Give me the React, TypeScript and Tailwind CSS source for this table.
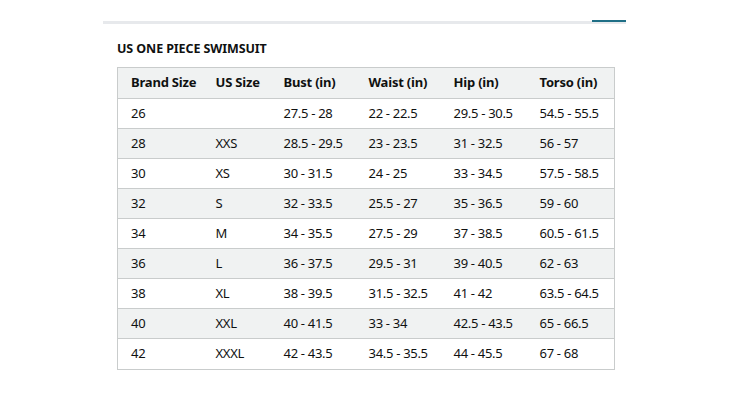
import React from "react";

const headers = ["Brand Size", "US Size", "Bust (in)", "Waist (in)", "Hip (in)", "Torso (in)"];
const rows = [
  ["26", "", "27.5 - 28", "22 - 22.5", "29.5 - 30.5", "54.5 - 55.5"],
  ["28", "XXS", "28.5 - 29.5", "23 - 23.5", "31 - 32.5", "56 - 57"],
  ["30", "XS", "30 - 31.5", "24 - 25", "33 - 34.5", "57.5 - 58.5"],
  ["32", "S", "32 - 33.5", "25.5 - 27", "35 - 36.5", "59 - 60"],
  ["34", "M", "34 - 35.5", "27.5 - 29", "37 - 38.5", "60.5 - 61.5"],
  ["36", "L", "36 - 37.5", "29.5 - 31", "39 - 40.5", "62 - 63"],
  ["38", "XL", "38 - 39.5", "31.5 - 32.5", "41 - 42", "63.5 - 64.5"],
  ["40", "XXL", "40 - 41.5", "33 - 34", "42.5 - 43.5", "65 - 66.5"],
  ["42", "XXXL", "42 - 43.5", "34.5 - 35.5", "44 - 45.5", "67 - 68"],
];
const widths = ["w-[85px]", "w-[68px]", "w-[85px]", "w-[85px]", "w-[86px]", "w-[88px]"];

export default function App() {
  return (
    <div className="w-[734px] h-[414px] bg-white overflow-hidden" style={{ fontFamily: '"Noto Sans", "Open Sans", sans-serif' }}>
      <div className="ml-[103px] w-[523px] pt-[21px]">
        <div className="relative h-[3px] bg-[#e7e9ec]">
          <div className="absolute right-0 top-[-1px] h-[2px] w-[34px] bg-[#1f6f86]" />
        </div>
        <div className="pl-[14px]">
          <div className="mt-[18px] text-[12.5px] font-bold leading-[14px] text-[#0f1111] tracking-[-0.1px]">
            US ONE PIECE SWIMSUIT
          </div>
          <table className="mt-[11px] w-[497px] table-fixed border-collapse border border-[#c9cccc] text-[13px] text-[#0f1111]">
            <colgroup>
              {widths.map((w, i) => (
                <col key={i} className={w} />
              ))}
            </colgroup>
            <thead>
              <tr className="h-[31px] bg-[#f0f2f2] border-b border-[#c9cccc]">
                {headers.map((h) => (
                  <th key={h} className="pl-[13px] text-left font-bold whitespace-nowrap tracking-[-0.2px]">
                    {h}
                  </th>
                ))}
              </tr>
            </thead>
            <tbody>
              {rows.map((r, i) => (
                <tr
                  key={i}
                  className={`${i === rows.length - 1 ? "h-[31px]" : "h-[30px]"} border-b border-[#c9cccc] ${i % 2 === 1 ? "bg-[#f0f2f2]" : "bg-white"}`}
                >
                  {r.map((c, j) => (
                    <td key={j} className="pl-[13px] whitespace-nowrap tracking-[-0.3px]">
                      {c}
                    </td>
                  ))}
                </tr>
              ))}
            </tbody>
          </table>
        </div>
      </div>
    </div>
  );
}
